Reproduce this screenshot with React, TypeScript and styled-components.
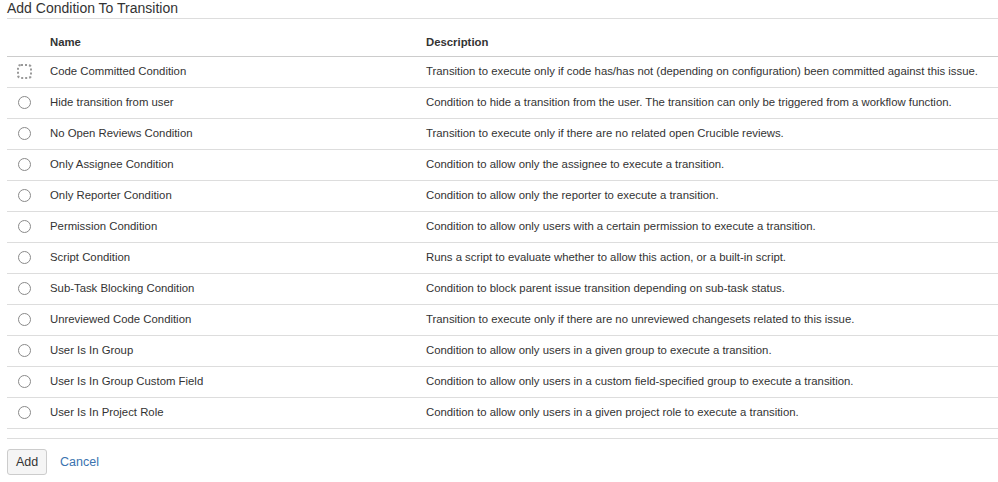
import React from 'react';
import styled, { createGlobalStyle } from 'styled-components';

type ConditionType = {
  name: string;
  description: string;
};

const conditions: ConditionType[] = [
  {
    name: 'Code Committed Condition',
    description:
      'Transition to execute only if code has/has not (depending on configuration) been committed against this issue.',
  },
  {
    name: 'Hide transition from user',
    description:
      'Condition to hide a transition from the user. The transition can only be triggered from a workflow function.',
  },
  {
    name: 'No Open Reviews Condition',
    description: 'Transition to execute only if there are no related open Crucible reviews.',
  },
  { name: 'Only Assignee Condition', description: 'Condition to allow only the assignee to execute a transition.' },
  { name: 'Only Reporter Condition', description: 'Condition to allow only the reporter to execute a transition.' },
  {
    name: 'Permission Condition',
    description: 'Condition to allow only users with a certain permission to execute a transition.',
  },
  {
    name: 'Script Condition',
    description: 'Runs a script to evaluate whether to allow this action, or a built-in script.',
  },
  {
    name: 'Sub-Task Blocking Condition',
    description: 'Condition to block parent issue transition depending on sub-task status.',
  },
  {
    name: 'Unreviewed Code Condition',
    description: 'Transition to execute only if there are no unreviewed changesets related to this issue.',
  },
  { name: 'User Is In Group', description: 'Condition to allow only users in a given group to execute a transition.' },
  {
    name: 'User Is In Group Custom Field',
    description: 'Condition to allow only users in a custom field-specified group to execute a transition.',
  },
  {
    name: 'User Is In Project Role',
    description: 'Condition to allow only users in a given project role to execute a transition.',
  },
];

const GlobalStyle = createGlobalStyle`
  html, body {
    margin: 0;
    padding: 0;
    background: #fff;
  }
  body {
    font-family: "Liberation Sans", Arial, sans-serif;
    color: #333;
  }
`;

export default function App() {
  return (
    <>
      <GlobalStyle />
      <Page>
        <Title>Add Condition To Transition</Title>
        <Table>
          <thead>
            <tr>
              <HeadCell $width="43px" />
              <HeadCell $width="376px">Name</HeadCell>
              <HeadCell>Description</HeadCell>
            </tr>
          </thead>
          <tbody>
            {conditions.map((c, i) => (
              <Row key={c.name}>
                <RadioCell>
                  <Radio $focused={i === 0} />
                </RadioCell>
                <Cell>{c.name}</Cell>
                <Cell>{c.description}</Cell>
              </Row>
            ))}
          </tbody>
        </Table>
        <Footer>
          <Button>Add</Button>
          <CancelLink href="#">Cancel</CancelLink>
        </Footer>
      </Page>
    </>
  );
}

const Page = styled.div`
  padding: 0 0 0 7px;
`;

const Title = styled.h2`
  margin: 0;
  padding: 0 0 2px;
  font-size: 14px;
  font-weight: normal;
  line-height: 16px;
  color: #333;
  border-bottom: 1px solid #ddd;
`;

const Table = styled.table`
  width: 100%;
  border-collapse: collapse;
  margin-top: 14px;
  font-size: 11.35px;
  border-bottom: 1px solid #ddd;
`;

const HeadCell = styled.th<{ $width?: string }>`
  width: ${(p) => p.$width || 'auto'};
  padding: 2px 0 0;
  height: 21px;
  text-align: left;
  font-weight: bold;
  vertical-align: top;
  line-height: 14px;
  border-bottom: 1px solid #ccc;
`;

const Row = styled.tr`
  height: 31px;
  border-bottom: 1px solid #ddd;
`;

const Cell = styled.td`
  padding: 0 0 2px;
  vertical-align: middle;
  line-height: 14px;
`;

const RadioCell = styled.td`
  padding: 0 0 1px 11px;
  vertical-align: middle;
`;

const Radio = styled.span<{ $focused?: boolean }>`
  display: block;
  width: 11px;
  height: 11px;
  border-radius: ${(p) => (p.$focused ? '3px' : '50%')};
  border: 1px solid ${(p) => (p.$focused ? 'transparent' : '#8a8a8a')};
  background: #fff;
  outline: ${(p) => (p.$focused ? '2px dotted #999' : 'none')};
  outline-offset: -1px;
`;

const Footer = styled.div`
  display: flex;
  align-items: center;
  gap: 13px;
  margin-top: 9px;
  padding-top: 10px;
  border-top: 1px solid #ddd;
`;

const Button = styled.button`
  width: 40px;
  height: 26px;
  padding: 0;
  font-family: "Liberation Sans", Arial, sans-serif;
  font-size: 12.5px;
  color: #333;
  background: #f5f5f5;
  border: 1px solid #ccc;
  border-radius: 3px;
`;

const CancelLink = styled.a`
  font-size: 12.5px;
  color: #3b73af;
  text-decoration: none;
`;
